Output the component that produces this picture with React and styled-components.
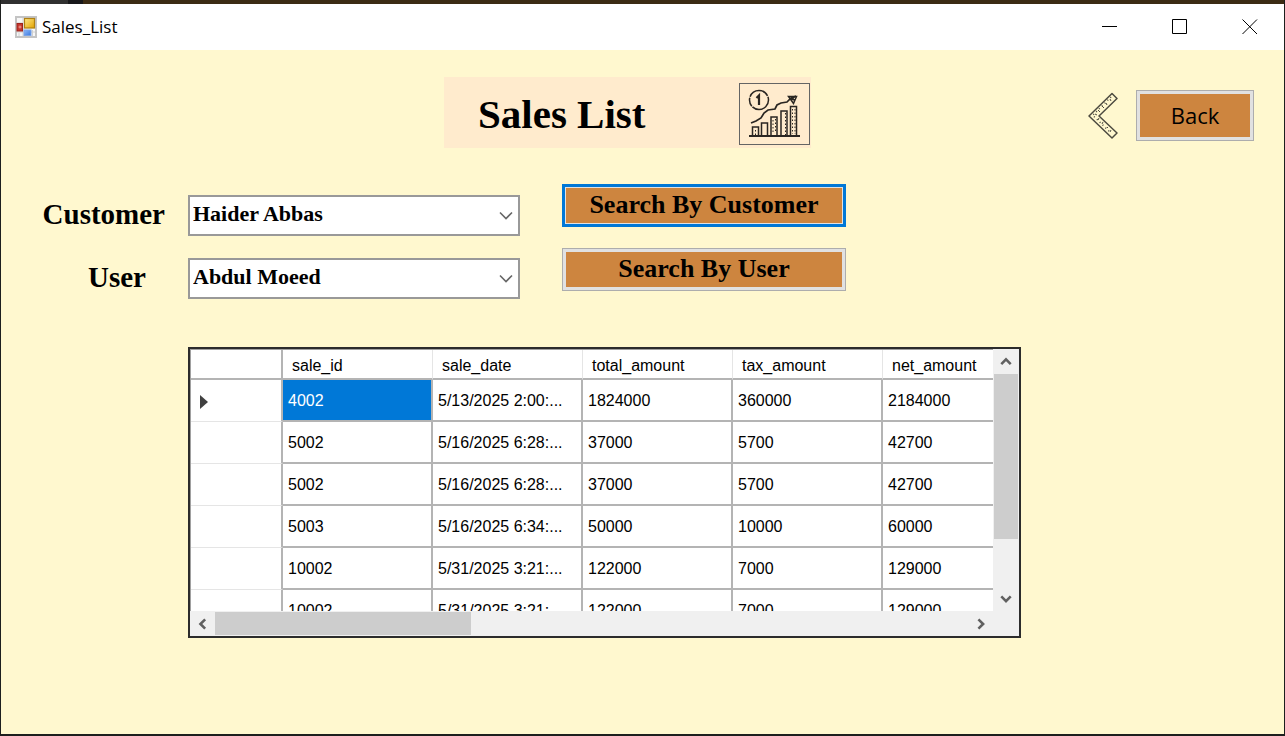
import React from 'react';
import styled, { createGlobalStyle } from 'styled-components';

const serif = '"Liberation Serif", "Times New Roman", serif';
const sans = '"Liberation Sans", Arial, sans-serif';
const ui = '"Open Sans", "Noto Sans", sans-serif';

const GlobalStyle = createGlobalStyle`
  *, *::before, *::after { box-sizing: border-box; }
  body { margin: 0; background: #1d1f1e; color: #000; font-family: ${sans}; }
`;

const Desktop = styled.div`
  min-height: 100vh;
  display: flex;
  flex-direction: column;
  padding: 0 1px 2px;
  background: #1d1f1e;
`;

const DesktopStrip = styled.div`
  flex: none;
  height: 4px;
  background: linear-gradient(90deg, #303030 67px, #18181a 67px 82px, #3b2b14 82px);
`;

const Window = styled.main`
  flex: 1;
  display: flex;
  flex-direction: column;
  background: #fff8cf;
`;

const TitleBar = styled.header`
  display: flex;
  align-items: center;
  height: 46px;
  padding-left: 13px;
  background: #fff;
`;

const WindowTitle = styled.span`
  flex: 1;
  margin-left: 5px;
  font: 17px/24px ${ui};
`;

const CaptionButton = styled.button`
  display: grid;
  place-items: center;
  width: 70px;
  height: 46px;
  padding: 0 0 0 2px;
  border: 0;
  background: none;
`;

const Header = styled.div`
  display: grid;
  grid-template-columns: 1fr minmax(300px, 367px) 1fr;
  align-items: center;
  padding: 27px 30px 0 0;
`;

const Banner = styled.div`
  grid-column: 2;
  display: flex;
  align-items: center;
  justify-content: space-between;
  height: 71px;
  padding: 2px 1px 0 34px;
  background: #ffebcd;
`;

const Heading = styled.h1`
  margin: 0;
  font: bold 41px/48px ${serif};
`;

const ChartFrame = styled.div`
  display: grid;
  place-items: center;
  width: 71px;
  height: 62px;
  border: 1px solid #646464;
`;

const BackGroup = styled.div`
  display: flex;
  align-items: center;
  justify-content: flex-end;
  gap: 18px;
  padding-top: 6px;
`;

const FormButton = styled.button`
  width: ${(p) => p.$width}px;
  height: ${(p) => p.$height}px;
  padding: 0 0 2px;
  border: ${(p) => (p.$active ? '3px solid #0078d7' : '1px solid #adadad')};
  background: #cd853f;
  box-shadow: inset 0 0 0 ${(p) => (p.$active ? 1 : 3)}px #e1e1e1;
  color: #000;
  font: ${(p) => (p.$plain ? `22px/30px ${ui}` : `bold 26px/32px ${serif}`)};
`;

const SearchForm = styled.form`
  display: flex;
  gap: 42px;
  margin-top: 36px;
`;

const Fields = styled.div`
  display: flex;
  flex-direction: column;
  gap: 22px;
  padding-top: 11px;
`;

const Field = styled.div`
  display: flex;
  align-items: center;
`;

const FieldLabel = styled.label`
  width: 187px;
  padding: 0 ${(p) => p.$inset}px 4px 0;
  text-align: right;
  font: bold 29px/34px ${serif};
`;

const Combo = styled.div`
  position: relative;
  width: 332px;
`;

const Select = styled.select`
  display: block;
  appearance: none;
  width: 100%;
  height: 41px;
  padding: 0 32px 4px 3px;
  border: 2px solid #999;
  border-radius: 0;
  background: #fff;
  color: #000;
  font: bold 22px/28px ${serif};
`;

const ComboArrow = styled.svg`
  position: absolute;
  right: 7px;
  top: 16px;
  pointer-events: none;
`;

const Actions = styled.div`
  display: flex;
  flex-direction: column;
  gap: 21px;
`;

const DataGrid = styled.section`
  display: grid;
  grid-template-columns: 1fr 26px;
  grid-template-rows: 1fr 25px;
  height: 291px;
  margin: 48px 263px 30px 187px;
  border: 2px solid #2c2c2c;
  background: #f0f0f0;
`;

const Viewport = styled.div`
  overflow: hidden;
  min-width: 0;
  border-top: 1px solid #a0a0a0;
  border-left: 1px solid #a0a0a0;
  background: #fff;
`;

const Table = styled.table`
  width: 842px;
  table-layout: fixed;
  border-collapse: separate;
  border-spacing: 0;
  font: 16px/20px ${sans};
`;

const HeadCell = styled.th`
  width: ${(p) => (p.$corner ? 92 : 150)}px;
  height: 30px;
  padding: 3px 0 0 9px;
  border-bottom: 2px solid #b4b4b4;
  border-right: ${(p) => (p.$corner ? '2px solid #b4b4b4' : '1px solid #e5e5e5')};
  text-align: left;
  font-weight: normal;
`;

const RowHead = styled.th`
  height: 42px;
  padding: 2px 0 0 9px;
  border-right: 2px solid #b4b4b4;
  border-bottom: 1px solid #e5e5e5;
  text-align: left;
`;

const Cell = styled.td`
  height: 42px;
  padding: 2px 0 0 5px;
  border-right: 2px solid #b4b4b4;
  border-bottom: 2px solid #b4b4b4;
  background: ${(p) => (p.$selected ? '#0078d7' : '#fff')};
  color: ${(p) => (p.$selected ? '#fff' : '#000')};
  white-space: nowrap;
`;

const Marker = styled.svg`
  display: block;
`;

const VerticalBar = styled.div`
  display: flex;
  flex-direction: column;
  align-items: center;
  width: 24px;
  margin-left: 1px;
`;

const HorizontalBar = styled.div`
  grid-column: 1;
  display: flex;
  align-items: center;
`;

const ScrollButton = styled.button`
  flex: none;
  display: grid;
  place-items: center;
  width: 25px;
  height: 25px;
  padding: 0;
  border: 0;
  background: none;
`;

const VerticalTrack = styled.div`
  flex: 1;
  width: 100%;
`;

const HorizontalTrack = styled.div`
  flex: 1;
  height: 23px;
`;

const VerticalThumb = styled.div`
  height: 78%;
  background: #cdcdcd;
`;

const HorizontalThumb = styled.div`
  width: 34%;
  height: 100%;
  background: #cdcdcd;
`;

const columns = ['sale_id', 'sale_date', 'total_amount', 'tax_amount', 'net_amount'];
const rows = [
  ['4002', '5/13/2025 2:00:...', '1824000', '360000', '2184000'],
  ['5002', '5/16/2025 6:28:...', '37000', '5700', '42700'],
  ['5002', '5/16/2025 6:28:...', '37000', '5700', '42700'],
  ['5003', '5/16/2025 6:34:...', '50000', '10000', '60000'],
  ['10002', '5/31/2025 3:21:...', '122000', '7000', '129000'],
  ['10002', '5/31/2025 3:21:...', '122000', '7000', '129000'],
];

const AppIcon = () => (
  <svg width="23" height="23" viewBox="0 0 23 23" aria-hidden="true">
    <defs>
      <linearGradient id="gold" x1="0" y1="0" x2="1" y2="1"><stop stopColor="#ffe889" /><stop offset="1" stopColor="#e2a300" /></linearGradient>
      <linearGradient id="blue" x1="0" y1="0" x2="1" y2="1"><stop stopColor="#8db8fa" /><stop offset="1" stopColor="#3b78dc" /></linearGradient>
    </defs>
    <rect x="2" y="1" width="20" height="20" fill="#f7f7f7" stroke="#c4c4c4" strokeWidth="2" />
    <path d="M9 2v18M3 7h6M3 16h18M5 17v3M18.500 14v6" stroke="#d0d0d0" />
    <rect x="10.500" y="2.500" width="10" height="9.500" fill="url(#gold)" stroke="#b08012" strokeWidth="1.200" />
    <rect x="3" y="7.500" width="5.500" height="7.500" fill="#c6372d" stroke="#9c231c" />
    <path d="M4.500 11h3M6 9.500v3" stroke="#ef9d95" />
    <rect x="10" y="14" width="7" height="5.500" fill="url(#blue)" stroke="#7ba3e6" />
  </svg>
);

const ChartIcon = () => (
  <svg width="54" height="50" viewBox="0 0 54 50" fill="none" stroke="#2a2622" strokeWidth="1.500" aria-hidden="true">
    <circle cx="11" cy="11" r="9.500" strokeDasharray="22 1 9 1" />
    <path d="M8.500 9l2.500-2.500v9.500" strokeWidth="2.200" />
    <path d="M3 34l5-2 5-3 3-5 4-3 7-1 2-4 4-2 6-1 3-3 6-3" strokeWidth="1.700" />
    <path d="M40.500 7.500h8l-3 7zM43 8l4 4M46 8l-3 4" />
    <path d="M1 47h51" strokeWidth="1.800" />
    <path d="M4.500 46v-8h6v8M13.500 46V34h6v12M23 46V28h6v18M33 46V22h6v24M42.500 46V17.500h6V46" strokeWidth="1.500" />
    <path d="M7.500 41v5M25 31v14M27.500 30v14M44.500 20v25M47 20v25M37.500 24v22" strokeWidth="1" strokeDasharray="1.500 2" />
  </svg>
);

const BackIcon = () => (
  <svg width="30" height="48" viewBox="0 0 30 48" fill="none" stroke="#4d4b40" strokeWidth="1.500" strokeLinejoin="round" aria-hidden="true">
    <path d="M24 1.500L1 24l23 22 5-5-18-17L29 6.500z" />
    <path d="M23 5L5 23M6 24.500L23 41" strokeDasharray="1 3" />
    <path d="M22 7l1 2M18 11l1 2M14 14l2 2M10 18l2 2M7 22l2 1M10 28l1-2M14 32l1-2M19 36l1-1M22 40l1-2" strokeWidth="1" />
  </svg>
);

const arrowPaths = {
  up: 'M1.500 9.500L7 4l5.500 5.500',
  down: 'M1.500 4L7 9.500 12.500 4',
  left: 'M9.500 1.500L4 7l5.500 5.500',
  right: 'M4 1.500L9.500 7 4 12.500',
};

const Scroll = ({ direction }) => (
  <ScrollButton type="button" aria-label={`Scroll ${direction}`}>
    <svg width="12" height="12" viewBox="0 0 14 14" fill="none" stroke="#606060" strokeWidth="3">
      <path d={arrowPaths[direction]} />
    </svg>
  </ScrollButton>
);

const ComboField = ({ id, label, value, inset }) => (
  <Field>
    <FieldLabel htmlFor={id} $inset={inset}>{label}</FieldLabel>
    <Combo>
      <Select id={id} defaultValue={value}>
        <option>{value}</option>
      </Select>
      <ComboArrow width="14" height="10" viewBox="0 0 14 10" fill="none" stroke="#666" strokeWidth="1.600">
        <path d="M1 1.500l6 6 6-6" />
      </ComboArrow>
    </Combo>
  </Field>
);

export default function App() {
  return (
    <Desktop>
      <GlobalStyle />
      <DesktopStrip />
      <Window>
        <TitleBar>
          <AppIcon />
          <WindowTitle>Sales_List</WindowTitle>
          <CaptionButton type="button" aria-label="Minimize">
            <svg width="16" height="16" stroke="#000"><path d="M0 7.500h15" /></svg>
          </CaptionButton>
          <CaptionButton type="button" aria-label="Maximize">
            <svg width="16" height="16" fill="none" stroke="#000"><path d="M.5.5h14v14H.5z" /></svg>
          </CaptionButton>
          <CaptionButton type="button" aria-label="Close">
            <svg width="16" height="16" stroke="#000"><path d="M.5.5l14.500 14.500M15 .5L.5 15" /></svg>
          </CaptionButton>
        </TitleBar>
        <Header>
          <Banner>
            <Heading>Sales List</Heading>
            <ChartFrame><ChartIcon /></ChartFrame>
          </Banner>
          <BackGroup>
            <BackIcon />
            <FormButton type="button" $plain $width={118} $height={51}>Back</FormButton>
          </BackGroup>
        </Header>
        <SearchForm>
          <Fields>
            <ComboField id="customer" label="Customer" value="Haider Abbas" inset={23} />
            <ComboField id="user" label="User" value="Abdul Moeed" inset={42} />
          </Fields>
          <Actions>
            <FormButton type="button" $active $width={284} $height={43}>Search By Customer</FormButton>
            <FormButton type="button" $width={284} $height={43}>Search By User</FormButton>
          </Actions>
        </SearchForm>
        <DataGrid aria-label="Sales">
          <Viewport>
            <Table>
              <thead>
                <tr>
                  <HeadCell $corner />
                  {columns.map((name) => <HeadCell key={name} scope="col">{name}</HeadCell>)}
                </tr>
              </thead>
              <tbody>
                {rows.map((row, r) => (
                  <tr key={r}>
                    <RowHead scope="row">
                      {r === 0 && <Marker width="9" height="14"><path d="M0 0l8 7-8 7z" fill="#404040" /></Marker>}
                    </RowHead>
                    {row.map((value, c) => <Cell key={c} $selected={r === 0 && c === 0}>{value}</Cell>)}
                  </tr>
                ))}
              </tbody>
            </Table>
          </Viewport>
          <VerticalBar>
            <Scroll direction="up" />
            <VerticalTrack><VerticalThumb /></VerticalTrack>
            <Scroll direction="down" />
          </VerticalBar>
          <HorizontalBar>
            <Scroll direction="left" />
            <HorizontalTrack><HorizontalThumb /></HorizontalTrack>
            <Scroll direction="right" />
          </HorizontalBar>
        </DataGrid>
      </Window>
    </Desktop>
  );
}
